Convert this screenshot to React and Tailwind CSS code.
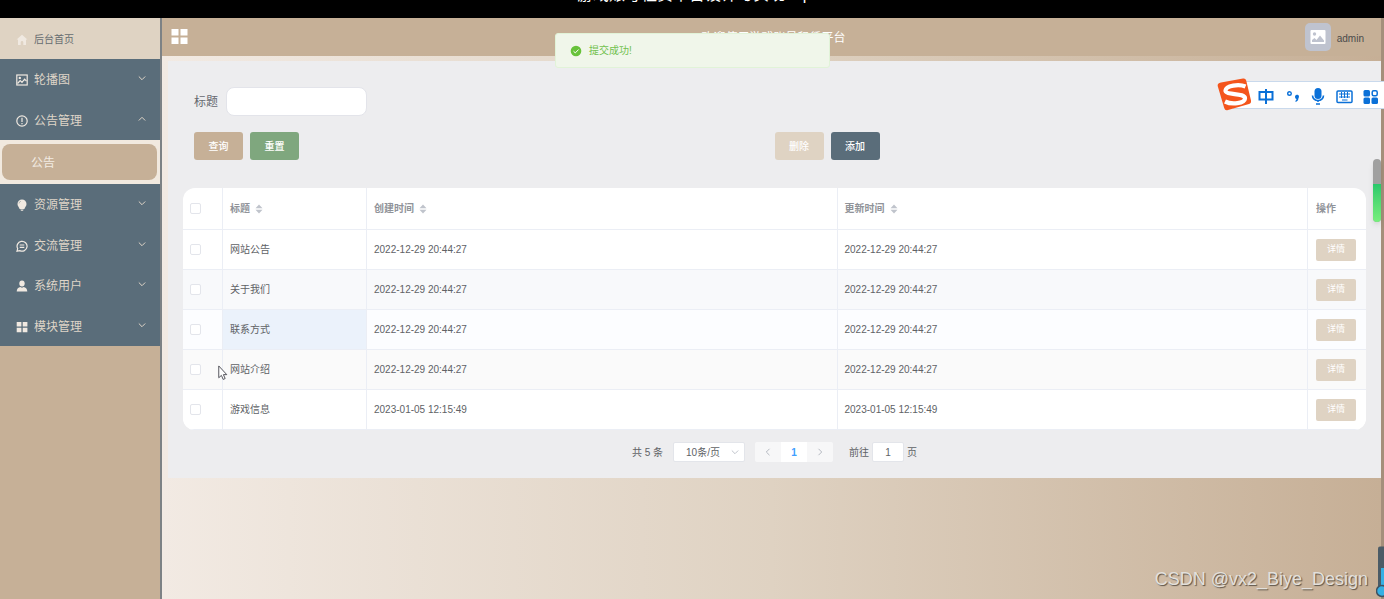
import { useState } from 'react'

const MENU_TOP = [
  { label: '轮播图', icon: 'picture' },
  { label: '公告管理', icon: 'notice', open: true },
]

const MENU_BOTTOM = [
  { label: '资源管理', icon: 'bulb' },
  { label: '交流管理', icon: 'chat' },
  { label: '系统用户', icon: 'user' },
  { label: '模块管理', icon: 'grid' },
]

const ROWS = [
  { id: 1, title: '网站公告', time: '2022-12-29 20:44:27', bg: 'bg-white' },
  { id: 2, title: '关于我们', time: '2022-12-29 20:44:27', bg: 'bg-[#f8f9fb]' },
  { id: 3, title: '联系方式', time: '2022-12-29 20:44:27', bg: 'bg-[#fcfdff]', active: true },
  { id: 4, title: '网站介绍', time: '2022-12-29 20:44:27', bg: 'bg-[#fafafa]' },
  { id: 5, title: '游戏信息', time: '2023-01-05 12:15:49', bg: 'bg-white' },
]

function MenuIcon({ name }) {
  const line = { fill: 'none', stroke: 'currentColor', strokeWidth: 1.2 }
  return (
    <svg viewBox="0 0 12 12" className="size-3 shrink-0 text-[#f0e9e1]" aria-hidden="true">
      {name === 'home' && <path fill="currentColor" d="M6 .8 11.4 5.6H10V11H7.3V8.2a1.3 1.3 0 0 0-2.6 0V11H2V5.6H.6z" />}
      {name === 'picture' && (
        <g {...line}>
          <rect x=".8" y="1" width="10.4" height="10" />
          <path d="M1.5 9.5 4.2 6.5 6 8.3 8.6 5.2 10.5 7.2" />
          <circle cx="3.8" cy="3.9" r=".6" />
        </g>
      )}
      {name === 'notice' && (
        <g {...line}>
          <circle cx="6" cy="6" r="5.2" />
          <path d="M6 2.8V6.9M6 8V9.3" />
        </g>
      )}
      {name === 'bulb' && (
        <>
          <path fill="currentColor" d="M6 .4a4.5 4.5 0 0 1 4.5 4.5c0 2.1-1.5 3-2.1 5.1H3.6C3 7.9 1.500 7 1.500 4.900A4.500 4.500 0 0 1 6 .4zM4.300 10.500h3.400L7 11.800H5z" />
          <path d="M3 4.500A2.600 2.600 0 0 1 5 2.200" fill="none" stroke="#a9adab" strokeWidth=".8" />
        </>
      )}
      {name === 'chat' && (
        <g {...line}>
          <path d="M1 11.200 1.700 8.600A5 4.900 0 1 1 3.800 10.600z" />
          <path d="M3.700 5H8.300M3.700 7.300H8.300" />
        </g>
      )}
      {name === 'user' && (
        <g fill="currentColor">
          <ellipse cx="6" cy="3.500" rx="2.700" ry="3" />
          <path d="M.7 11.500C.7 8.500 2.500 7.300 4.300 6.900L6 7.700 7.700 6.900C9.500 7.300 11.300 8.500 11.300 11.500z" />
        </g>
      )}
      {name === 'grid' && <path fill="currentColor" d="M.7 1h4.700v4.500H.7zM6.700 1h4.700v4.500H6.700zM.7 6.800h4.700v4.500H.7zM6.700 6.800h4.700v4.500H6.700z" />}
    </svg>
  )
}

function Chevron({ up, className }) {
  return (
    <svg viewBox="0 0 8 8" className={className} fill="none" stroke="currentColor" aria-hidden="true">
      <path d={up ? 'M.8 5.500 4 2.300 7.200 5.500' : 'M.8 2.500 4 5.700 7.200 2.500'} />
    </svg>
  )
}

function MenuItem({ item }) {
  return (
    <button className="flex items-center gap-1.5 pl-4 pr-3.5 pt-0.5 text-xs text-[#dfd5c8]" aria-expanded={!!item.open}>
      <MenuIcon name={item.icon} />
      <span>{item.label}</span>
      <Chevron up={item.open} className="ml-auto mb-1 size-2" />
    </button>
  )
}

function Sidebar() {
  return (
    <aside className="w-[162px] shrink-0 bg-[#c6b097] border-r-2 border-[#7d8285]">
      <nav>
        <a href="#home" className="flex h-[41px] items-center gap-1.5 bg-[#dfd3c3] pl-4 pt-0.5 text-[10px] text-[#666c70]">
          <MenuIcon name="home" />
          <span>后台首页</span>
        </a>
        <div className="grid h-[81px] grid-rows-2 bg-[#5a6d7a]">
          {MENU_TOP.map(item => <MenuItem key={item.label} item={item} />)}
        </div>
        <div className="bg-[#f1e9df] py-1 pl-0.5 pr-[3px]">
          <a href="#notice" className="flex h-9 items-center rounded-lg bg-[#c6b097] pl-[29px] pt-0.5 text-xs text-[#f3ece3]">公告</a>
        </div>
        <div className="grid h-[162px] grid-rows-4 bg-[#5a6d7a]">
          {MENU_BOTTOM.map(item => <MenuItem key={item.label} item={item} />)}
        </div>
      </nav>
    </aside>
  )
}

function Header() {
  return (
    <header className="grid h-[38px] grid-cols-[1fr_auto_1fr] items-center bg-[#c6b097] pl-[9px] pr-[17px]">
      <button aria-label="菜单" className="justify-self-start pb-0.5">
        <svg viewBox="0 0 17 17" className="size-[17px]" fill="#fff">
          <path d="M.5 1h7v6.500h-7zM9.500 1h7v6.500h-7zM.5 9.500h7V16h-7zM9.500 9.500h7V16h-7z" />
        </svg>
      </button>
      <h1 className="pl-3 pt-0.5 text-xs text-white">欢迎使用游戏账号租赁平台</h1>
      <div className="flex items-center justify-self-end gap-1.5">
        <span className="flex h-7 w-[26px] items-center justify-center rounded-[5px] bg-[#bfc3cf]">
          <svg viewBox="0 0 16 16" className="size-4">
            <rect x=".5" y="1" width="15" height="14" rx="1" fill="#fff" />
            <circle cx="4.500" cy="5" r="1.700" fill="#bfc3cf" />
            <path d="M2 13V11L4.500 9 6.500 11 10 6.500 14 11.500V13z" fill="#bfc3cf" />
          </svg>
        </span>
        <span className="pt-0.5 text-[10px] text-[#4b4b4b]">admin</span>
      </div>
    </header>
  )
}

function SearchForm() {
  const [title, setTitle] = useState('')
  const btn = 'h-7 w-[49px] rounded-[3px] text-[10px] font-medium text-white'
  return (
    <form className="px-[11px]" onSubmit={e => e.preventDefault()}>
      <div className="flex items-center gap-2">
        <label htmlFor="title" className="text-xs text-[#66696f]">标题</label>
        <input
          id="title"
          value={title}
          onChange={e => setTitle(e.target.value)}
          className="h-[29px] w-[141px] rounded-lg border border-[#e3e4ea] bg-white px-3 text-xs"
        />
      </div>
      <div className="mt-4 grid grid-cols-2">
        <div className="flex gap-[7px]">
          <button className={`${btn} bg-[#c6b097]`}>查询</button>
          <button type="reset" className={`${btn} bg-[#7fa77e]`}>重置</button>
        </div>
        <div className="flex gap-[7px]">
          <button type="button" disabled className={`${btn} bg-[#dfd3c3]`}>删除</button>
          <button type="button" className={`${btn} bg-[#5a6d7a]`}>添加</button>
        </div>
      </div>
    </form>
  )
}

function SortHead({ children }) {
  return (
    <span className="flex items-center gap-[5px]">
      {children}
      <svg viewBox="0 0 8 10" className="h-2.5 w-2" fill="#c0c4cc" aria-hidden="true">
        <path d="M4 .5 7.500 4.200H.5zM4 9.500.5 5.800h7z" />
      </svg>
    </span>
  )
}

function Check({ label }) {
  return (
    <input
      type="checkbox"
      aria-label={label}
      className="block size-[11px] appearance-none rounded-xs border border-[#e3e5eb] bg-white checked:bg-[#409eff]"
    />
  )
}

function NoticeTable() {
  const cell = 'border-b border-r border-[#ebeef5] px-[7px]'
  const last = 'border-b border-[#ebeef5] pl-2'
  return (
    <div className="mt-7 overflow-hidden rounded-xl bg-white">
      <table className="w-full table-fixed border-separate border-spacing-0 text-left text-[10px] text-[#606266]">
        <colgroup>
          <col className="w-10" />
          <col className="w-36" />
          <col />
          <col />
          <col className="w-[58px]" />
        </colgroup>
        <thead>
          <tr className="h-[42px] text-[#909399]">
            <th className={cell}><Check label="全选" /></th>
            <th className={`${cell} font-bold`}><SortHead>标题</SortHead></th>
            <th className={`${cell} font-bold`}><SortHead>创建时间</SortHead></th>
            <th className={`${cell} font-bold`}><SortHead>更新时间</SortHead></th>
            <th className={`${last} font-bold`}>操作</th>
          </tr>
        </thead>
        <tbody>
          {ROWS.map(row => (
            <tr key={row.id} className={`h-10 ${row.bg}`}>
              <td className={cell}><Check label={row.title} /></td>
              <td className={`${cell} ${row.active ? 'bg-[#ebf2fb]' : ''}`}>{row.title}</td>
              <td className={cell}>{row.time}</td>
              <td className={cell}>{row.time}</td>
              <td className={last}>
                <button className="block h-[22px] w-10 rounded-xs bg-[#dfd3c3] text-[9px] text-white">详情</button>
              </td>
            </tr>
          ))}
        </tbody>
      </table>
    </div>
  )
}

function Pagination() {
  return (
    <div className="mt-3 flex h-5 items-center justify-center text-[10px] text-[#606266]">
      <span>共 5 条</span>
      <div className="relative ml-2.5">
        <select aria-label="每页条数" className="h-5 w-[72px] appearance-none rounded-xs border border-[#e3e5ea] bg-white pl-3 text-[10px]">
          <option>10条/页</option>
          <option>20条/页</option>
        </select>
        <Chevron className="pointer-events-none absolute right-1.5 top-1.5 size-2 text-[#c0c4cc]" />
      </div>
      <div className="ml-2.5 flex h-5 overflow-hidden rounded-xs bg-[#f7f7f8]">
        <button aria-label="上一页" disabled className="flex w-[26px] items-center justify-center">
          <Chevron className="size-2 rotate-90 text-[#b4b8c0]" />
        </button>
        <button className="w-[26px] bg-white font-bold text-[#409eff]">1</button>
        <button aria-label="下一页" disabled className="flex w-[26px] items-center justify-center">
          <Chevron className="size-2 -rotate-90 text-[#b4b8c0]" />
        </button>
      </div>
      <label htmlFor="page" className="ml-4">前往</label>
      <input id="page" defaultValue="1" className="mx-[3px] h-5 w-8 rounded-xs border border-[#e3e5ea] bg-white text-center text-[10px]" />
      <span>页</span>
    </div>
  )
}

function Toast() {
  return (
    <div role="status" className="absolute left-1/2 top-[33px] flex h-[35px] w-[275px] -translate-x-[137px] items-center gap-[7px] rounded-[3px] border border-[#e1f3d8] bg-[#f0f6ea] pl-3.5 text-[10px] text-[#72c14e]">
      <svg viewBox="0 0 12 12" className="size-3">
        <circle cx="6" cy="6" r="5.300" fill="#67c23a" />
        <path d="M3.500 6.200 5.300 7.900 8.600 4.500" fill="none" stroke="#fff" />
      </svg>
      提交成功!
    </div>
  )
}

// floating input method bar
function ImeBar() {
  return (
    <div className="absolute right-0 top-[78px] flex h-[33px] w-[167px] items-center">
      <div className="ml-4 h-7 flex-1 border-y border-[#c9d9ec] bg-white" />
      <svg viewBox="0 0 167 33" className="absolute inset-0 h-[33px] w-[167px]" fill="none" stroke="#0a70d8" strokeWidth="2">
        <path d="M4 4.500 26 .5Q28.500 0 29.200 2.500L34 22.500Q34.500 25 32 26L11 32Q8 33 7.200 30L.7 8Q.2 5.200 4 4.500z" fill="#f4551c" stroke="none" />
        <path d="M28.500 8.500C22 5.700 9 7.500 8.500 12.500 8 17.500 28.500 14.500 28 20.500 27.500 25.500 15 27 8 23.500" stroke="#fff" strokeWidth="4.200" />
        <path d="M42.500 14h13v7.500h-13zM49 11v15" />
        <circle cx="72.500" cy="15.500" r="1.800" strokeWidth="1.400" />
        <path d="M78 18.500a2 2 0 1 1 3.500 1.500c0 2-1 3.200-2.700 4l-.5-1c.8-.5 1.200-1.200 1.200-2-.9-.2-1.500-1-1.500-2.500z" fill="#0a70d8" stroke="none" />
        <rect x="97.500" y="10" width="7" height="11" rx="3.500" fill="#0a70d8" stroke="none" />
        <path d="M95.500 17.500a5.500 5 0 0 0 11 0M101 22.500V24M99 26h4" strokeWidth="1.600" />
        <rect x="120" y="13" width="15" height="11.500" rx="1" strokeWidth="1.500" />
        <path d="M122 16h11M122 19h11M125 22h5.500M124.500 14v6M127.500 14v6M130.500 14v6" strokeWidth="1" />
        <g fill="#0a70d8" stroke="none">
          <rect x="146.500" y="12" width="6.500" height="6.500" rx="1.500" />
          <rect x="146.500" y="19.500" width="6.500" height="6.500" rx="1.500" />
          <rect x="154.500" y="19.500" width="6.500" height="6.500" rx="1.500" />
        </g>
        <rect x="155.200" y="12.700" width="5" height="5" rx="1.500" strokeWidth="1.500" />
      </svg>
    </div>
  )
}

function Overlays() {
  return (
    <>
      <Toast />
      <ImeBar />
      <div className="absolute right-[3px] top-[159px] flex h-[63px] w-2 flex-col overflow-hidden rounded-full bg-[#a0a0a0] shadow-md">
        <div className="mt-[25px] flex-1 bg-linear-to-b from-[#27c96b] to-[#77ef7d]" />
      </div>
      <svg viewBox="0 0 12 18" className="absolute left-[217px] top-[365px] h-[17px] w-3">
        <path d="M1.500 1V13.500L4.300 11 6.200 15.300 8.300 14.300 6.400 10.200H10z" fill="#fff" stroke="#4d4d55" />
      </svg>
      <svg viewBox="0 0 8 52" className="absolute right-0 top-[546px] h-[52px] w-2">
        <rect x="2" y=".5" width="8" height="46" rx="2" fill="#4b5b66" />
        <rect x="5" y="22" width="3" height="24" fill="#35b0e4" />
        <circle cx="6" cy="45" r="5.500" fill="#35b0e4" stroke="#3f5260" strokeWidth="1.500" />
      </svg>
      <div className="absolute right-4 top-[567px] text-lg leading-6 text-[#e3e0dc] [text-shadow:1px_1px_1px_#5c5248]">
        CSDN @vx2_Biye_Design
      </div>
    </>
  )
}

export default function App() {
  return (
    <div className="relative flex min-h-screen flex-col overflow-hidden font-['Liberation_Sans','Noto_Sans_CJK_SC',sans-serif]">
      <div className="h-[18px] overflow-hidden bg-black pl-[577px]">
        <p className="-mt-[13px] whitespace-nowrap text-base leading-4 text-white">游戏账号租赁平台设计与实现.mp4</p>
      </div>
      <div className="flex flex-1">
        <Sidebar />
        <div className="min-w-0 flex-1 border-r-3 border-[#a48f7b] bg-linear-to-r from-[#f2eae3] via-[#dfd2c2] to-[#c6af96]">
          <Header />
          <main className="ml-1.5 mt-[5px] bg-[#ededef] px-[15px] pb-4 pt-[26px]">
            <SearchForm />
            <NoticeTable />
            <Pagination />
          </main>
        </div>
      </div>
      <Overlays />
    </div>
  )
}
